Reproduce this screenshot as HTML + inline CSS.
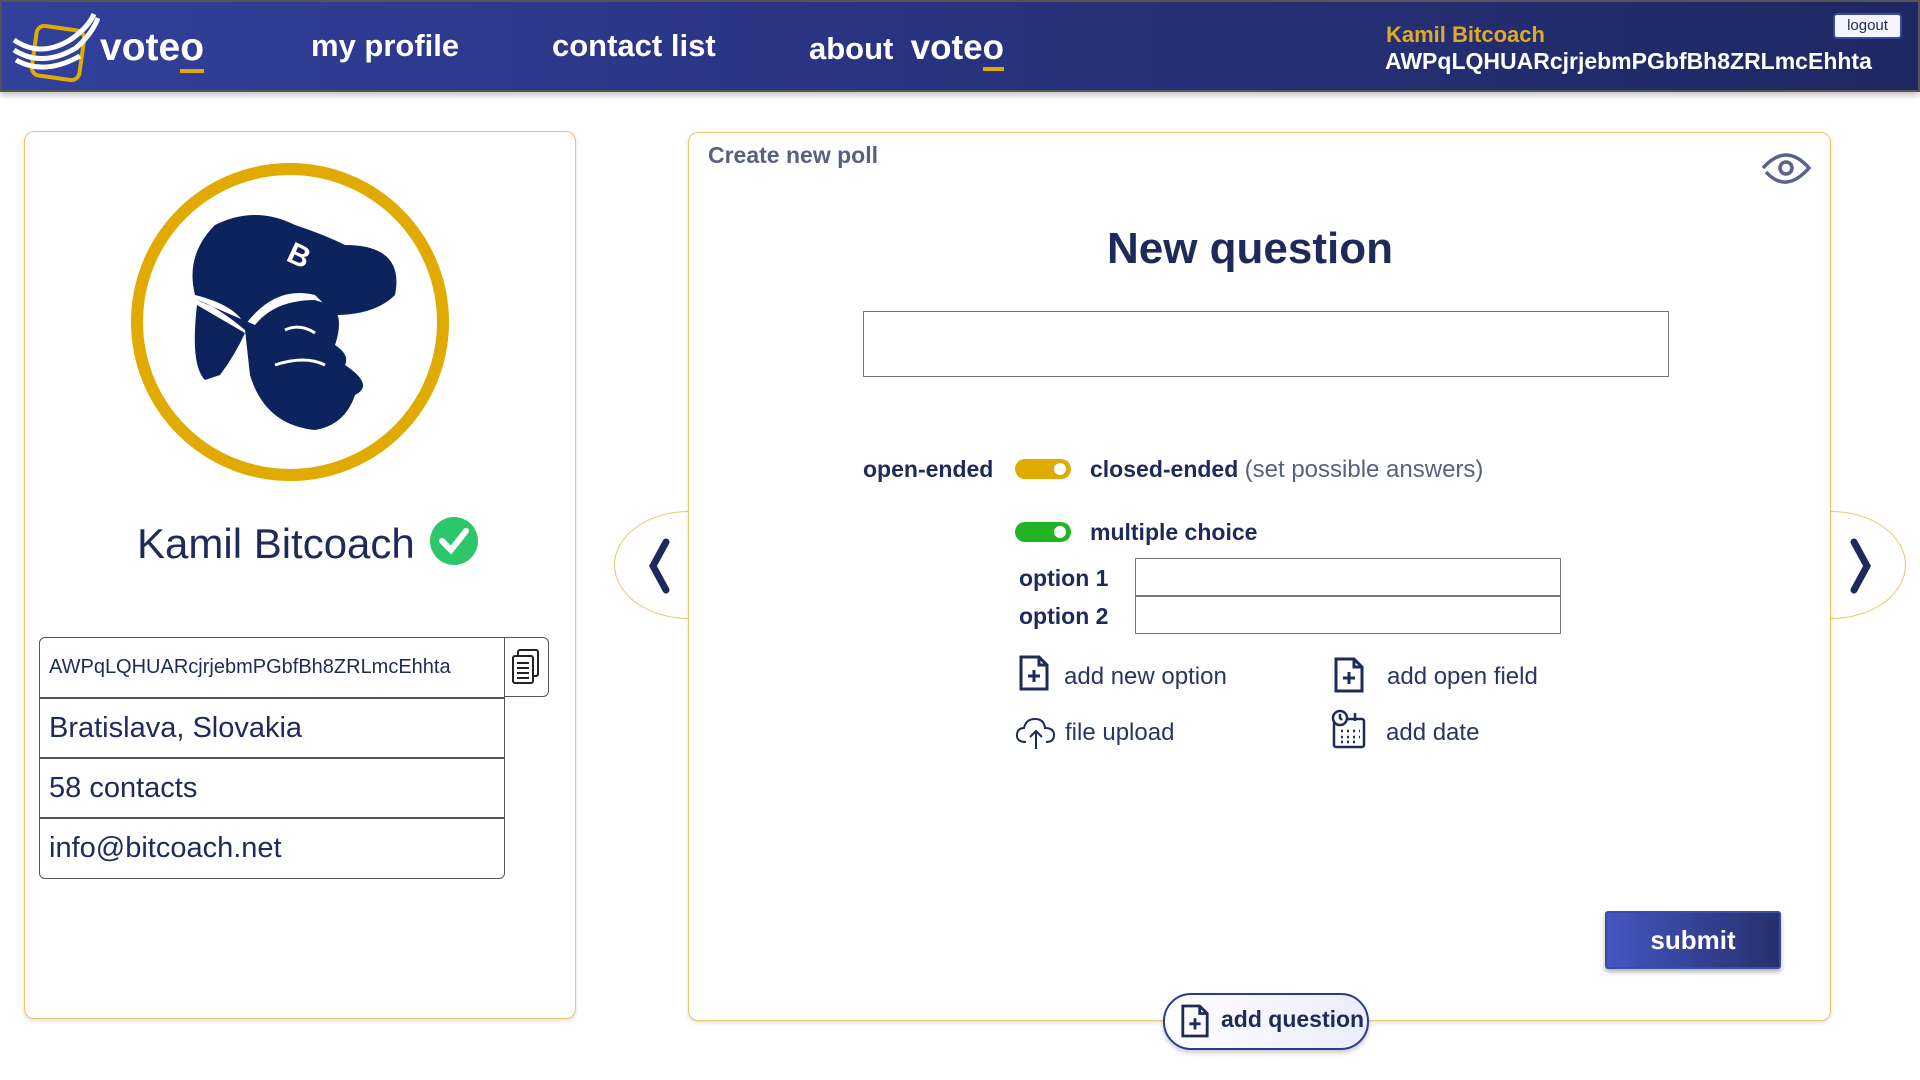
<!DOCTYPE html>
<html><head><meta charset="utf-8"><style>
*{box-sizing:border-box;margin:0;padding:0}
body{width:1920px;height:1080px;background:#fff;font-family:"Liberation Sans",sans-serif;color:#1e2a5a;position:relative;overflow:hidden}
.abs{position:absolute}
.hdr{left:0;top:0;width:1920px;height:92px;background:linear-gradient(90deg,#31409a 0%,#2a3584 40%,#1f2862 100%);border:2px solid #555;box-shadow:0 3px 6px rgba(0,0,0,.25)}
.nav{color:#fff;font-size:31px;font-weight:bold;top:28px}
.card{border:1.5px solid #e9c46a;border-radius:10px;background:#fff;box-shadow:0 2px 5px rgba(0,0,0,.12)}
.t{white-space:nowrap}
.row{left:39px;width:466px;border:1px solid #555;font-size:29px;padding-left:9px;display:flex;align-items:center;color:#1e2a5a}
.lbl{font-size:23px;font-weight:bold;color:#1e2a5a}
.tog{width:56px;height:20px;border-radius:10px}
.tog::after{content:"";position:absolute;right:5px;top:4px;width:12px;height:12px;border-radius:50%;background:#fff}
.act{font-size:24px;color:#2a3566}
</style></head><body>
<div class="abs hdr"></div>
<svg class="abs" style="left:10px;top:10px" width="90" height="75" viewBox="0 0 90 75">
<rect x="24" y="18" width="48" height="50" rx="8" transform="rotate(8 48 43)" fill="none" stroke="#e0aa00" stroke-width="4"/>
<path d="M4 30 Q30 48 60 30 Q78 18 84 4" fill="none" stroke="#fff" stroke-width="5"/>
<path d="M4 40 Q32 58 66 38 Q82 24 88 8" fill="none" stroke="#fff" stroke-width="5"/>
<path d="M6 50 Q34 66 70 46" fill="none" stroke="#fff" stroke-width="5"/>
</svg>
<div class="abs t" style="left:100px;top:26px;color:#fff;font-size:39px;font-weight:bold">vote<span style="border-bottom:4px solid #e0aa00">o</span></div>
<div class="abs nav t" style="left:311px">my profile</div>
<div class="abs nav t" style="left:552px">contact list</div>
<div class="abs nav t" style="left:809px">about &nbsp;<span style="font-size:35px">vote<span style="border-bottom:4px solid #e0aa00">o</span></span></div>
<div class="abs t" style="left:1386px;top:22px;color:#e0aa2a;font-size:22px;font-weight:bold">Kamil Bitcoach</div>
<div class="abs t" style="left:1385px;top:48px;color:#fff;font-size:23px;font-weight:bold">AWPqLQHUARcjrjebmPGbfBh8ZRLmcEhhta</div>
<div class="abs" style="left:1833px;top:13px;width:69px;height:26px;background:#f4f5fd;border:2px solid #3a4aa0;border-radius:4px;font-size:15px;text-align:center;line-height:22px;color:#1e2a5a">logout</div>

<div class="abs card" style="left:24px;top:131px;width:552px;height:888px"></div>
<div class="abs" style="left:131px;top:163px;width:318px;height:318px;border:12px solid #e0aa00;border-radius:50%"></div>
<svg class="abs" style="left:175px;top:205px" width="230" height="240" viewBox="0 0 230 240">
<path d="M20 90 Q10 50 40 20 Q80 0 120 20 Q150 30 170 40 Q230 40 220 90 Q200 110 160 110 L140 90 Q100 80 70 120 Q60 100 20 90Z" fill="#0c235e"/>
<path d="M22 95 Q40 100 70 125 L75 170 Q90 220 140 225 Q170 220 180 190 Q200 180 170 160 Q175 150 160 140 Q170 110 155 100 L140 95 Q100 95 80 120 Z" fill="#0c235e"/>
<path d="M22 100 Q15 160 30 175 L45 170 Q60 150 70 128Z" fill="#0c235e"/>
<path d="M110 125 Q125 118 140 128" stroke="#fff" stroke-width="3" fill="none"/>
<path d="M100 160 Q130 150 150 160" stroke="#fff" stroke-width="3" fill="none"/>
<text x="110" y="55" fill="#fff" font-size="30" font-weight="bold" font-family="Liberation Sans" transform="rotate(25 110 55)">B</text>
</svg>
<div class="abs t" style="left:137px;top:520px;font-size:42px;color:#1e2a5a">Kamil Bitcoach</div>
<svg class="abs" style="left:429px;top:516px" width="50" height="50" viewBox="0 0 50 50"><circle cx="25" cy="25" r="24" fill="#2ec66a"/><path d="M13 25 L22 34 L37 15" stroke="#fff" stroke-width="6" fill="none" stroke-linecap="round"/></svg>
<div class="abs row" style="top:637px;height:61px;font-size:20px;border-radius:6px 0 0 0">AWPqLQHUARcjrjebmPGbfBh8ZRLmcEhhta</div>
<div class="abs" style="left:504px;top:637px;width:45px;height:60px;border:1px solid #555;border-radius:0 6px 6px 0"></div>
<svg class="abs" style="left:510px;top:648px" width="32" height="38" viewBox="0 0 32 38" fill="none" stroke="#222" stroke-width="2"><rect x="8" y="2" width="20" height="26" rx="2"/><rect x="3" y="8" width="20" height="27" rx="2" fill="#fff"/><path d="M7 15h12M7 20h12M7 25h12M7 30h12"/></svg>
<div class="abs row" style="top:698px;height:60px">Bratislava, Slovakia</div>
<div class="abs row" style="top:758px;height:60px">58 contacts</div>
<div class="abs row" style="top:818px;height:61px;border-radius:0 0 6px 6px">info@bitcoach.net</div>

<div class="abs" style="left:614px;top:511px;width:150px;height:108px;border:1.5px solid #e9c46a;border-radius:50%;background:#fff"></div>
<div class="abs" style="left:1756px;top:511px;width:150px;height:108px;border:1.5px solid #e9c46a;border-radius:50%;background:#fff"></div>
<div class="abs card" style="left:688px;top:132px;width:1143px;height:889px"></div>
<svg class="abs" style="left:644px;top:538px" width="30" height="56"><path d="M22 4 L9 28 L22 52" stroke="#1e2a5a" stroke-width="7" fill="none" stroke-linecap="round"/></svg>
<svg class="abs" style="left:1846px;top:538px" width="30" height="56"><path d="M8 4 L21 28 L8 52" stroke="#1e2a5a" stroke-width="7" fill="none" stroke-linecap="round"/></svg>
<div class="abs t" style="left:708px;top:142px;font-size:23px;font-weight:bold;color:#5a6080">Create new poll</div>
<svg class="abs" style="left:1760px;top:150px" width="52" height="36" viewBox="0 0 52 36" fill="none" stroke="#5a6288" stroke-width="3.5"><path d="M3 18 Q26 -8 49 18 Q26 44 6 22"/><circle cx="26" cy="18" r="6"/></svg>
<div class="abs t" style="left:1050px;top:224px;width:400px;text-align:center;font-size:44px;font-weight:bold;color:#1e2a5a">New question</div>
<div class="abs" style="left:863px;top:311px;width:806px;height:66px;border:1.5px solid #777"></div>
<div class="abs lbl t" style="left:863px;top:456px">open-ended</div>
<div class="abs tog" style="left:1015px;top:459px;background:#e0aa00"></div>
<div class="abs lbl t" style="left:1090px;top:456px">closed-ended <span style="font-weight:normal;color:#5a6080;font-size:24px">(set possible answers)</span></div>
<div class="abs tog" style="left:1015px;top:522px;background:#22b422"></div>
<div class="abs lbl t" style="left:1090px;top:519px">multiple choice</div>
<div class="abs lbl t" style="left:1019px;top:565px">option 1</div>
<div class="abs lbl t" style="left:1019px;top:603px">option 2</div>
<div class="abs" style="left:1135px;top:558px;width:426px;height:38px;border:1.5px solid #777"></div>
<div class="abs" style="left:1135px;top:596px;width:426px;height:38px;border:1.5px solid #777"></div>
<svg class="abs" style="left:1018px;top:654px" width="32" height="38" viewBox="0 0 32 38" fill="none" stroke="#1e2a5a" stroke-width="3"><path d="M3 3h18l8 8v24H3z M21 3v8h8"/><path d="M16 16v12M10 22h12"/></svg>
<div class="abs act t" style="left:1064px;top:663px">add new option</div>
<svg class="abs" style="left:1333px;top:656px" width="32" height="38" viewBox="0 0 32 38" fill="none" stroke="#1e2a5a" stroke-width="3"><path d="M3 3h18l8 8v24H3z M21 3v8h8"/><path d="M16 16v12M10 22h12"/></svg>
<div class="abs act t" style="left:1387px;top:663px">add open field</div>
<svg class="abs" style="left:1014px;top:716px" width="44" height="34" viewBox="0 0 44 34" fill="none" stroke="#1e2a5a" stroke-width="2"><path d="M12 26 Q2 26 3 18 Q4 12 10 12 Q12 3 21 3 Q30 3 31 12 Q40 12 40 19 Q40 26 32 26"/><path d="M22 33V16M16 21l6-6 6 6"/></svg>
<div class="abs act t" style="left:1065px;top:719px">file upload</div>
<svg class="abs" style="left:1329px;top:709px" width="40" height="40" viewBox="0 0 40 40" fill="none" stroke="#1e2a5a" stroke-width="2.5"><rect x="5" y="10" width="30" height="28" rx="2"/><circle cx="11" cy="9" r="7" fill="#fff"/><path d="M11 5v4l2 2M26 4v8"/><path d="M12 22h2M18 22h2M24 22h2M30 22h1M12 28h2M18 28h2M24 28h2M30 28h1M12 33h2M18 33h2M24 33h2"/></svg>
<div class="abs act t" style="left:1386px;top:719px">add date</div>
<div class="abs" style="left:1605px;top:911px;width:176px;height:58px;background:linear-gradient(90deg,#4456c2,#26306c);border:2px solid #3a4aa8;border-radius:3px;color:#fff;font-size:26px;font-weight:bold;text-align:center;line-height:54px;box-shadow:0 3px 5px rgba(0,0,0,.3)">submit</div>
<div class="abs" style="left:1163px;top:993px;width:206px;height:57px;background:linear-gradient(90deg,#fff,#eaedfb);border:2px solid #2c3a90;border-radius:28px;box-shadow:0 3px 5px rgba(0,0,0,.2)"></div>
<svg class="abs" style="left:1180px;top:1002px" width="30" height="38" viewBox="0 0 32 38" fill="none" stroke="#1e2a5a" stroke-width="3"><path d="M3 3h18l8 8v24H3z M21 3v8h8"/><path d="M16 16v12M10 22h12"/></svg>
<div class="abs t" style="left:1221px;top:1006px;font-size:23px;font-weight:bold;color:#1e2a5a">add question</div>
</body></html>
